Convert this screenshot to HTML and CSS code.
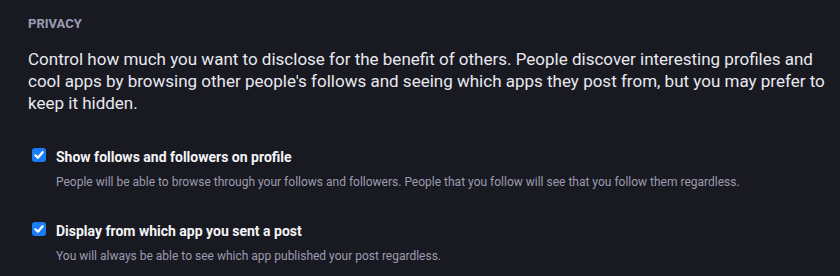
FILE: index.html
```html
<!DOCTYPE html>
<html>
<head>
<meta charset="utf-8">
<link rel="stylesheet" href="styles.css">
</head>
<body>
<div class="page">
  <h4 class="section-title">Privacy</h4>
  <p class="lead">Control how much you want to disclose for the benefit of others. People discover interesting profiles and cool apps by browsing other people's follows and seeing which apps they post from, but you may prefer to keep it hidden.</p>
  <div class="option">
    <div class="option-row">
      <span class="checkbox"><svg viewBox="0 0 14 14" width="14" height="14"><path d="M3.4 7.3 L5.9 9.8 L10.6 4.2" fill="none" stroke="#fff" stroke-width="2.2" stroke-linecap="round" stroke-linejoin="round"/></svg></span>
      <span class="label">Show follows and followers on profile</span>
    </div>
    <div class="hint">People will be able to browse through your follows and followers. People that you follow will see that you follow them regardless.</div>
  </div>
  <div class="option">
    <div class="option-row">
      <span class="checkbox"><svg viewBox="0 0 14 14" width="14" height="14"><path d="M3.4 7.3 L5.9 9.8 L10.6 4.2" fill="none" stroke="#fff" stroke-width="2.2" stroke-linecap="round" stroke-linejoin="round"/></svg></span>
      <span class="label">Display from which app you sent a post</span>
    </div>
    <div class="hint">You will always be able to see which app published your post regardless.</div>
  </div>
</div>
</body>
</html>
```
FILE: styles.css
```css
html, body {
  margin: 0;
  padding: 0;
  background: #191a21;
  font-family: Roboto, "Liberation Sans", sans-serif;
}
.page {
  padding: 15px 10px 0 28px;
}
.section-title {
  margin: 0;
  font-size: 13px;
  font-weight: 700;
  text-transform: uppercase;
  color: #9d9cb6;
  line-height: 18px;
}
.lead {
  margin: 15px 0 0 0;
  font-size: 17px;
  line-height: 22px;
  color: #e8e8f0;
}
.option {
  margin-top: 33px;
  padding-left: 4px;
}
.option + .option {
  margin-top: 31px;
}
.option-row {
  display: flex;
  align-items: flex-start;
  gap: 10px;
}
.checkbox {
  width: 14px;
  height: 14px;
  margin-top: 1px;
  border-radius: 3px;
  background: #1a7cf6;
  display: flex;
  flex: none;
}
.label {
  font-size: 14px;
  font-weight: 700;
  color: #f4f4f8;
  line-height: 20px;
}
.hint {
  margin-top: 7px;
  padding-left: 24px;
  font-size: 12px;
  line-height: 16px;
  color: #9c9bb0;
}
```
